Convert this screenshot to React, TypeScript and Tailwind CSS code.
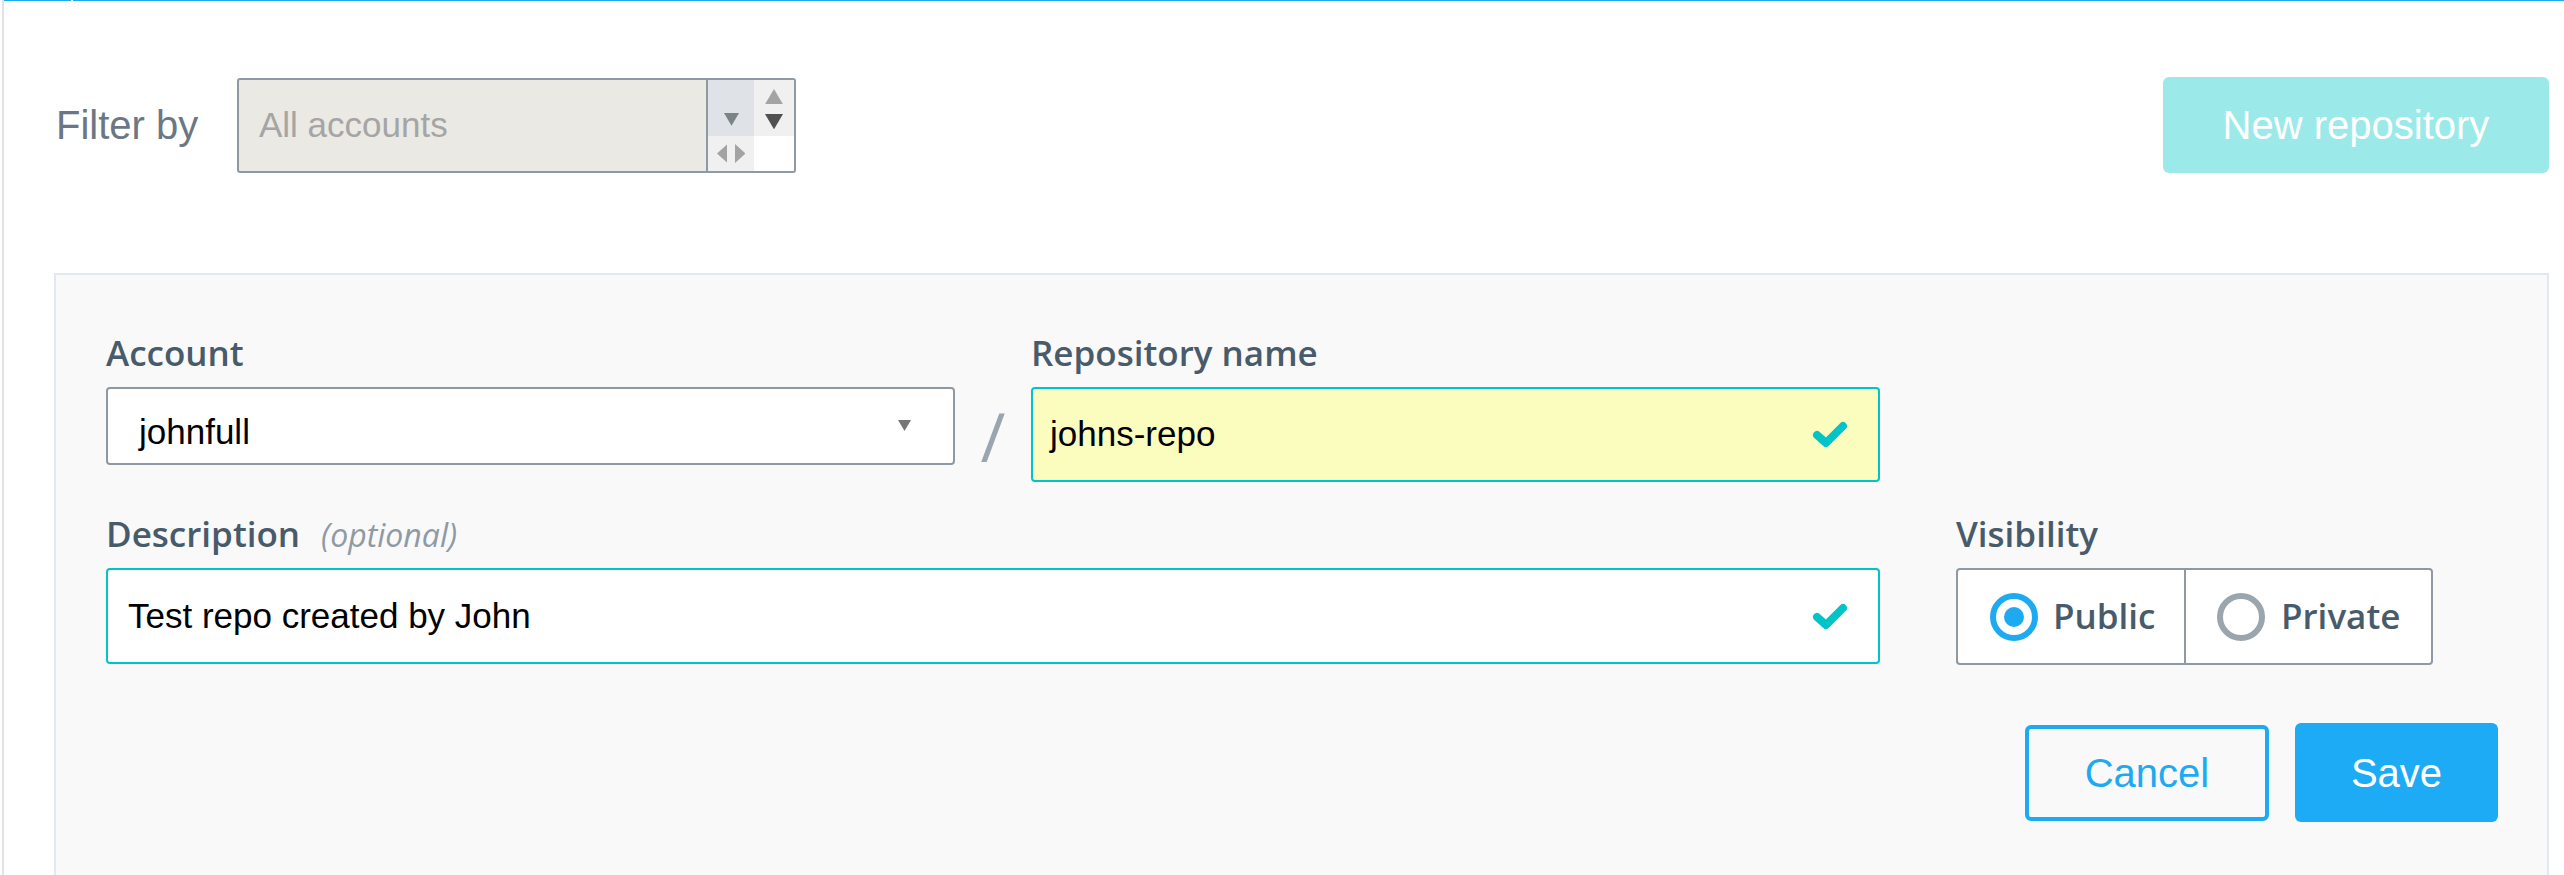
import React from 'react'

const Check = () => (
  <svg width="36" height="27" viewBox="0 0 36 27" className="shrink-0">
    <polyline
      points="5,14 14,22 31,5"
      fill="none"
      stroke="#00c4c8"
      strokeWidth="8"
      strokeLinecap="round"
      strokeLinejoin="round"
    />
  </svg>
)

const Tri = ({ dir, color, size = 12 }: { dir: 'up' | 'down' | 'left' | 'right'; color: string; size?: number }) => {
  const pts: Record<string, string> = {
    up: '0,10 6,0 12,10',
    down: '0,0 12,0 6,10',
    left: '10,0 10,12 0,6',
    right: '0,0 10,6 0,12',
  }
  const vb = dir === 'up' || dir === 'down' ? '0 0 12 10' : '0 0 10 12'
  const w = dir === 'up' || dir === 'down' ? size : size * 0.55
  const h = dir === 'up' || dir === 'down' ? size * 0.85 : size
  return (
    <svg width={w} height={h} viewBox={vb} preserveAspectRatio="none">
      <polygon points={pts[dir]} fill={color} />
    </svg>
  )
}

const labelCls = "font-['Open_Sans',sans-serif] font-semibold text-[35px] leading-[50px] h-[50px] text-[#485b6b]"

export default function App() {
  return (
    <div className="w-[2564px] h-[875px] overflow-hidden bg-white flex font-['Liberation_Sans',Arial,sans-serif]">
      <div className="w-[2px] shrink-0" />
      <div className="w-[2px] shrink-0 bg-[#dfe3e8]" />
      <div className="flex-1 flex flex-col">
        {/* top accent line */}
        <div className="flex h-px shrink-0">
          <div className="w-[67px] bg-[#1eaaf1]" />
          <div className="w-[2px]" />
          <div className="flex-1 bg-[#1eaaf1]" />
        </div>

        {/* header */}
        <div className="flex items-center pt-[76px] pl-[52px] pr-[15px]">
          <div className="w-[181px] text-[40px] text-[#6b7884]">Filter by</div>
          <div className="w-[559px] h-[95px] flex border-2 border-[#8e99a4] rounded-[3px] bg-[#ebe9e3] overflow-hidden">
            <div className="flex-1 flex items-center pl-[20px] text-[35px] text-[#a5a5a5]">All accounts</div>
            <div className="w-[48px] flex flex-col border-l-2 border-[#8e99a4]">
              <div className="h-[56px] bg-[#dfe2e6] flex items-end justify-center pb-[10px]">
                <Tri dir="down" color="#7b8388" size={15} />
              </div>
              <div className="flex-1 bg-[#f0f0f0] flex items-center justify-center gap-[8px]">
                <Tri dir="left" color="#a3a3a3" size={19} />
                <Tri dir="right" color="#a3a3a3" size={19} />
              </div>
            </div>
            <div className="w-[40px] flex flex-col">
              <div className="h-[56px] bg-[#f0f0f0] flex flex-col items-center pt-[9px] gap-[10px]">
                <Tri dir="up" color="#a3a3a3" size={18} />
                <Tri dir="down" color="#505050" size={18} />
              </div>
              <div className="flex-1 bg-white" />
            </div>
          </div>
          <div className="flex-1" />
          <button className="w-[386px] h-[96px] rounded-[6px] bg-[#9beae9] text-white text-[40px]">
            New repository
          </button>
        </div>

        {/* form panel */}
        <div className="flex-1 mt-[100px] ml-[50px] mr-[15px] border-2 border-b-0 border-[#e3e8f0] bg-[#f9f9f9] pl-[50px] pt-[53px]">
          <div className="w-[2392px] flex flex-col">
            {/* row 1 */}
            <div className="flex items-start">
              <div className="w-[849px] flex flex-col">
                <div className={labelCls}>Account</div>
                <div className="mt-[9px] h-[78px] bg-white border-2 border-[#8e99a4] rounded-[4px] flex items-center pl-[31px] pr-[42px]">
                  <span className="flex-1 pt-[12px] text-[35px] text-black">johnfull</span>
                  <Tri dir="down" color="#767676" size={13} />
                </div>
              </div>
              <div className="w-[76px] h-[154px] flex items-end justify-center pb-[12px]">
                <span className="font-['Open_Sans',sans-serif] text-[68px] leading-none text-[#9ba5af]">/</span>
              </div>
              <div className="w-[849px] flex flex-col">
                <div className={labelCls}>Repository name</div>
                <div className="mt-[9px] h-[95px] bg-[#fbfdbf] border-2 border-[#00c4c8] rounded-[4px] flex items-center pl-[17px] pr-[30px]">
                  <span className="flex-1 text-[35px] text-black">johns-repo</span>
                  <Check />
                </div>
              </div>
            </div>

            {/* row 2 */}
            <div className="flex items-start mt-[27px]">
              <div className="w-[1774px] flex flex-col">
                <div className={labelCls + ' flex items-baseline'}>
                  Description
                  <span className="ml-[21px] font-normal italic text-[32px] text-[#8e9aa6]">(optional)</span>
                </div>
                <div className="mt-[9px] h-[96px] bg-white border-2 border-[#00c4c8] rounded-[4px] flex items-center pl-[20px] pr-[30px]">
                  <span className="flex-1 text-[35px] text-black">Test repo created by John</span>
                  <Check />
                </div>
              </div>
              <div className="w-[76px]" />
              <div className="w-[477px] flex flex-col">
                <div className={labelCls}>Visibility</div>
                <div className="mt-[9px] h-[97px] bg-white border-2 border-[#8e99a4] rounded-[4px] flex font-['Open_Sans',sans-serif] font-semibold text-[35px] text-[#485b6b]">
                  <div className="w-[228px] flex items-center pl-[32px] gap-[15px] border-r-2 border-[#8e99a4]">
                    <span className="w-12 h-12 rounded-full border-[6px] border-[#1eaaf1] flex items-center justify-center">
                      <span className="w-[20px] h-[20px] rounded-full bg-[#1eaaf1]" />
                    </span>
                    Public
                  </div>
                  <div className="flex-1 flex items-center pl-[31px] gap-[16px]">
                    <span className="w-12 h-12 rounded-full border-[6px] border-[#9aa5ae]" />
                    Private
                  </div>
                </div>
              </div>
            </div>

            {/* row 3 */}
            <div className="flex justify-end items-center gap-[26px] mt-[58px]">
              <button className="w-[244px] h-[96px] rounded-[6px] border-4 border-[#1eaaf1] text-[#1eaaf1] text-[40px]">
                Cancel
              </button>
              <button className="w-[203px] h-[99px] rounded-[6px] bg-[#1eabf6] text-white text-[40px]">
                Save
              </button>
            </div>
          </div>
        </div>
      </div>
    </div>
  )
}
